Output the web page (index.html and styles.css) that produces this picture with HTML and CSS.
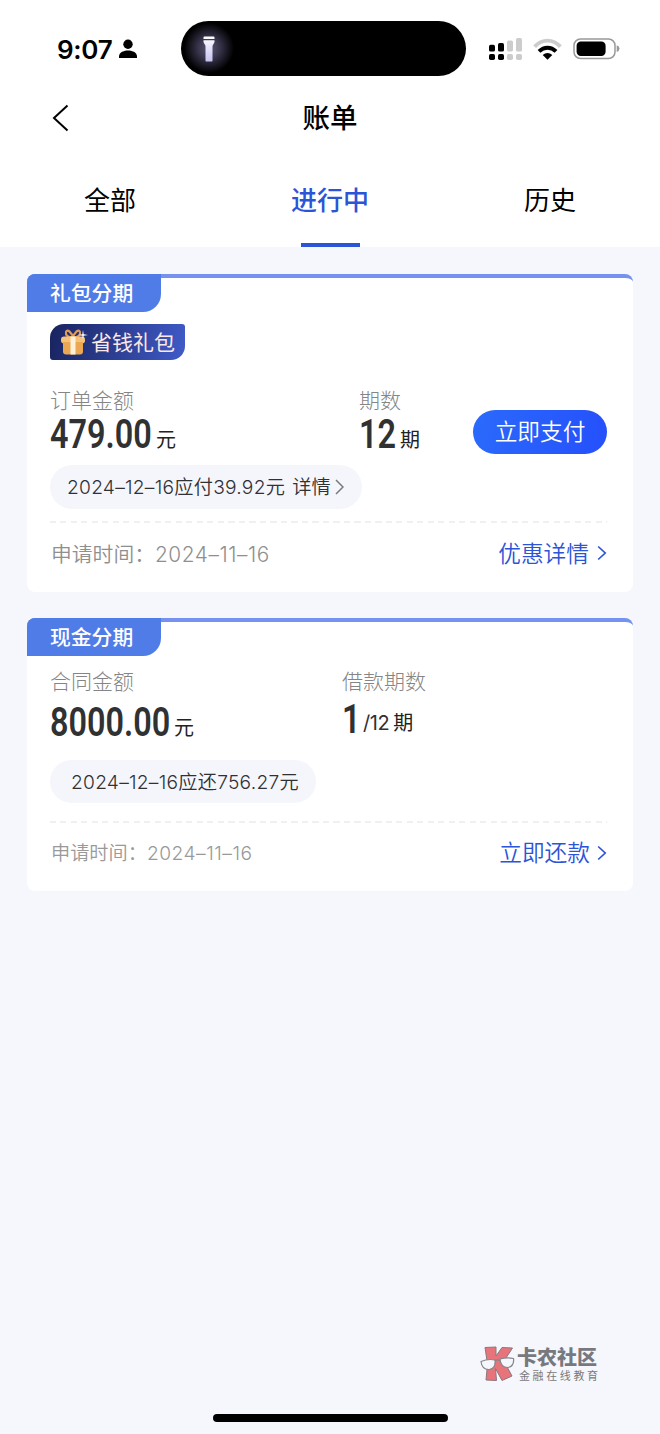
FILE: index.html
```html
<!DOCTYPE html>
<html lang="zh-CN">
<head>
<meta charset="utf-8">
<title>账单</title>
<link rel="stylesheet" href="styles.css">
</head>
<body>
<div class="screen">
  <header class="top">
    <div class="status">
      <span class="clock">9:07</span>
      <svg class="person" width="18" height="20" viewBox="0 0 18 20"><circle cx="9" cy="5.3" r="4.700"/><path d="M0 19v-1.400C0 13.700 4 11.500 9 11.500s9 2.200 9 6.100V19z"/></svg>
      <div class="island">
        <svg width="12" height="26" viewBox="0 0 12 26"><defs><linearGradient id="torch" x1="0" y1="0" x2="0" y2="1"><stop offset="0" stop-color="#fff"/><stop offset="1" stop-color="#c5c0f2"/></linearGradient></defs><path fill="url(#torch)" d="M.5 1.5q0-1 1-1h9q1 0 1 1V3H.5zM.5 4.300h11v1.200q0 1.200-1 2.400-1 1.100-1 2.500v14q0 1.200-1.200 1.200H3.700q-1.200 0-1.200-1.200v-14q0-1.400-1-2.500-1-1.200-1-2.400z"/></svg>
      </div>
      <svg class="signal" width="34" height="24" viewBox="0 0 34 24"><g><rect x="0" y="7.800" width="6" height="6.800" rx="1.700"/><rect x="9" y="6" width="6" height="8.600" rx="1.700"/><rect x="0" y="17" width="6" height="6" rx="1.700"/><rect x="9" y="17" width="6" height="6" rx="1.700"/></g><g fill="#ccc"><rect x="18" y="3.500" width="6" height="11" rx="1.700"/><rect x="27" y="1" width="6" height="13.600" rx="1.700"/><rect x="18" y="17" width="6" height="6" rx="1.700"/><rect x="27" y="17" width="6" height="6" rx="1.700"/></g></svg>
      <svg class="wifi" width="29" height="22" viewBox="0 0 29 22"><g fill="none" stroke-width="3.900"><path stroke="#ccc" d="M1.600 8.600Q7.200 2.600 14.500 2.600T27.400 8.600"/><path stroke="#000" d="M6 13.400Q9.800 9.700 14.500 9.700t8.500 3.700"/></g><path d="M9.700 17.100Q12 15 14.500 15t4.800 2.100L14.500 21.800z"/></svg>
      <svg class="battery" width="47" height="22" viewBox="0 0 47 22"><rect x="1" y="1" width="41" height="19.500" rx="6.500" fill="none" stroke="#999" stroke-width="1.500"/><rect x="3.600" y="3.600" width="29" height="14.400" rx="4.200"/><path fill="#999" d="M43.700 7.200q2.800.8 2.800 3.400t-2.800 3.400z"/></svg>
    </div>
    <div class="nav">
      <svg width="18" height="28" viewBox="0 0 18 28"><path d="M15.500 1.500 2 14l13.500 12.500"/></svg>
      <h1>账单</h1>
    </div>
    <nav class="tabs">
      <span class="tab">全部</span>
      <span class="tab active">进行中</span>
      <span class="tab">历史</span>
    </nav>
  </header>
  <main class="list">
    <section class="card">
      <div class="ribbon">礼包分期</div>
      <div class="gift">
        <svg width="27" height="27" viewBox="0 0 27 27"><path fill="none" stroke="#e09a55" stroke-width="2.200" d="M12 8.500Q4 8 5 3q.8-2.500 3.500-.5L12 7l3.500-4.500Q18.200.5 19 3q1 5-7 5.500"/><rect x="0" y="7.500" width="24" height="7" rx="3" fill="#f6c27a"/><path fill="#eba752" d="M2 13h20v9.500q0 3-3 3H5q-3 0-3-3z"/><path fill="#fff0d8" d="M9.500 7.500h5v18h-5z"/><path fill="#fff" d="m22 1 .7 4.300L27 6l-4.300.7L22 11l-.7-4.300L17 6l4.300-.7z"/></svg>
        <span>省钱礼包</span>
      </div>
      <div class="figures first">
        <div class="amount"><div class="label">订单金额</div><div class="value"><b class="w102"><i>479.00</i></b><span>元</span></div></div>
        <div class="term"><div class="label">期数</div><div class="value"><b class="w36"><i>12</i></b><span>期</span></div></div>
        <button class="pay">立即支付</button>
      </div>
      <div class="pill"><span>2024–12–16应付39.92元</span><span class="detail">详情</span><svg width="9" height="16" viewBox="0 0 9 16"><path d="m1 1 7 7-7 7"/></svg></div>
      <div class="foot"><span class="date">申请时间：<span>2024–11–16</span></span><span class="link">优惠详情<svg width="10" height="16" viewBox="0 0 10 16"><path d="m1.200 1.500 7 6.500-7 6.500"/></svg></span></div>
    </section>
    <section class="card loan">
      <div class="ribbon">现金分期</div>
      <div class="figures">
        <div class="amount"><div class="label">合同金额</div><div class="value"><b class="w120"><i>8000.00</i></b><span>元</span></div></div>
        <div class="term"><div class="label">借款期数</div><div class="value part"><b class="w15"><i>1</i></b><em>/12</em><span>期</span></div></div>
      </div>
      <div class="pill"><span>2024–12–16应还756.27元</span></div>
      <div class="foot"><span class="date">申请时间：<span>2024–11–16</span></span><span class="link">立即还款<svg width="10" height="16" viewBox="0 0 10 16"><path d="m1.200 1.500 7 6.500-7 6.500"/></svg></span></div>
    </section>
  </main>
  <footer>
    <div class="brand">
      <svg width="36" height="36" viewBox="0 0 36 36"><g fill="#e8747b" stroke="#8a777c" stroke-width="1"><path d="M5 1.500 16 1v9L22 1.500 32.500 2 24 15l8 15-10 4.500-6.500-12 1 12L6 34 7.500 18z"/></g><g fill="#f5f7fc" stroke="#85858a" stroke-width="1.200"><path d="M1 15.500Q8 12.500 15 14q1 8-5.500 9.500Q2 24 1 15.500zM20 13q7-2 13.500-.5 1 7.500-5.500 9Q20.500 21.500 20 13z"/><path fill="none" d="M15 15q2.500-2 5-.5"/></g></svg>
      <div><div class="brand-name">卡农社区</div><div class="brand-sub">金融在线教育</div></div>
    </div>
    <div class="home"></div>
  </footer>
</div>
</body>
</html>
```
FILE: styles.css
```css
* { box-sizing: border-box; }
body { margin: 0; background: #f5f7fc; color: #303133; font-family: Inter, "Noto Sans CJK SC", sans-serif; }
svg { display: block; flex: none; }
.screen { width: 660px; height: 1434px; display: flex; flex-direction: column; overflow: hidden; white-space: nowrap; }
.top { height: 247px; background: #fff; color: #000; }
.status { height: 84px; padding: 21px 0 0 57px; display: flex; align-items: flex-start; }
.clock { width: 62px; font-size: 26px; line-height: 57px; font-weight: 600; letter-spacing: -.3px; }
.person { margin-top: 18px; }
.island { width: 285px; height: 55px; margin-left: 44px; padding: 15px 0 0 22px; border-radius: 28px; background: radial-gradient(circle at 28px 27px, #5a5675 0, #37344b 11px, #000 25px); }
.signal { margin: 16px 0 0 23px; }
.wifi { margin: 17px 0 0 10px; }
.battery { margin: 17px 0 0 11px; }
.nav { height: 68px; display: grid; grid-template-columns: 52px 1fr 52px; align-items: center; }
.nav svg { justify-self: end; width: 18px; fill: none; stroke: #000; stroke-width: 2; transform: translateX(18px); }
h1 { margin: 0; font-size: 27.5px; line-height: 68px; font-weight: 500; text-align: center; }
.tabs { height: 95px; display: grid; grid-template-columns: repeat(3, 1fr); }
.tab { display: flex; flex-direction: column; align-items: center; font-size: 26px; line-height: 98px; }
.active { color: #2c54d6; font-weight: 500; }
.active::after { content: ""; width: 59px; height: 4px; margin-top: -7px; background: #2c54d6; }
.list { padding: 27px 27px 0; display: grid; gap: 26px; }
.card { height: 318px; padding: 0 26px 0 23px; border-radius: 8px; border-top: 4px solid #7592f1; background: #fff; display: flex; flex-direction: column; }
.ribbon { width: 134px; height: 38px; flex: none; margin: -4px 0 0 -23px; padding-left: 23px; border-radius: 8px 0 18px 0; background: #507ce8; color: #fff; font-size: 20.800px; line-height: 39px; font-weight: 500; }
.gift { width: 135px; height: 36px; margin-top: 12px; padding: 5px 0 0 11px; display: flex; gap: 3px; border-radius: 14px 3px 14px 3px; background: linear-gradient(100deg, #19235f, #405bc9); color: #fbe8e5; font-size: 21px; line-height: 28px; font-weight: 400; }
.figures { height: 76px; display: grid; grid-template-columns: 292px 1fr; }
.first { margin-top: 29px; grid-template-columns: 309px 114px 134px; }
.label { font-size: 21px; line-height: 24px; font-weight: 300; color: #858585; }
.value { display: flex; align-items: baseline; height: 44px; line-height: 44px; }
.value b { display: block; font: 600 40px/44px Roboto, sans-serif; }
.value i { display: inline-block; font-style: normal; transform-origin: 0 50%; transform: scaleX(.81); }
.value span { font-size: 20px; margin-left: 4px; color: #222; transform: translateY(-1px); }
.value em { font-size: 20px; font-style: normal; margin-left: 6px; letter-spacing: -.4px; }
.w102 { width: 102px; }
.w36 { width: 37px; }
.w120 { width: 120px; }
.w15 { width: 15px; }
.pay { width: 134px; height: 44px; margin-top: 21px; padding: 0; border: 0; border-radius: 22px; background: linear-gradient(100deg, #2b6afb, #2550fb); color: #fff; font: 350 22.700px/44px Inter, "Noto Sans CJK SC", sans-serif; }
.pill { width: 312px; height: 44px; flex: none; padding-left: 17px; border-radius: 22px; background: #f5f6fc; display: flex; align-items: center; font-size: 19.200px; line-height: 44px; font-weight: 350; letter-spacing: .25px; }
.detail { margin: 0 4px 0 7px; }
.pill svg, .link svg { fill: none; stroke: #77797e; stroke-width: 1.500; }
.foot { margin-top: 12px; height: 64px; display: flex; justify-content: space-between; line-height: 66px; background: repeating-linear-gradient(90deg, #f0f0f2 0 6px, transparent 6px 10.500px) 0 0 / 100% 2px no-repeat; }
.date { padding-left: 1px; color: #8f8f8f; font-size: 20.800px; font-weight: 350; }
.date span { letter-spacing: .6px; }
.link { display: flex; align-items: center; gap: 8px; color: #2c54d6; font-size: 22.700px; font-weight: 350; }
.link svg { stroke: #2c54d6; stroke-width: 1.700; }
.loan { height: 273px; }
.loan .figures { margin-top: 14px; height: 90px; }
.loan .value { margin-top: 7px; }
.loan .part { margin-top: 4px; }
.part em, .part span { transform: translateY(-3px); }
.loan .pill { width: 266px; padding-left: 21px; height: 43px; }
.loan .foot { margin-top: 18px; line-height: 64px; }
.loan .date { font-size: 19.200px; color: #999; }
.loan .date span { letter-spacing: .5px; }
.loan .link { gap: 7px; }
.first + .pill + .foot { line-height: 67px; }
footer { margin-top: auto; height: 88px; display: flex; flex-direction: column; align-items: center; }
.brand { width: 118px; margin-left: 418px; display: flex; gap: 1px; color: #77797e; }
.brand-name { font-size: 20px; line-height: 25px; font-weight: 900; }
.brand-sub { margin-left: 2px; font-size: 11px; line-height: 11px; letter-spacing: 2.600px; }
.home { width: 235px; height: 8px; margin-top: 32px; border-radius: 4px; background: #000; }
```
